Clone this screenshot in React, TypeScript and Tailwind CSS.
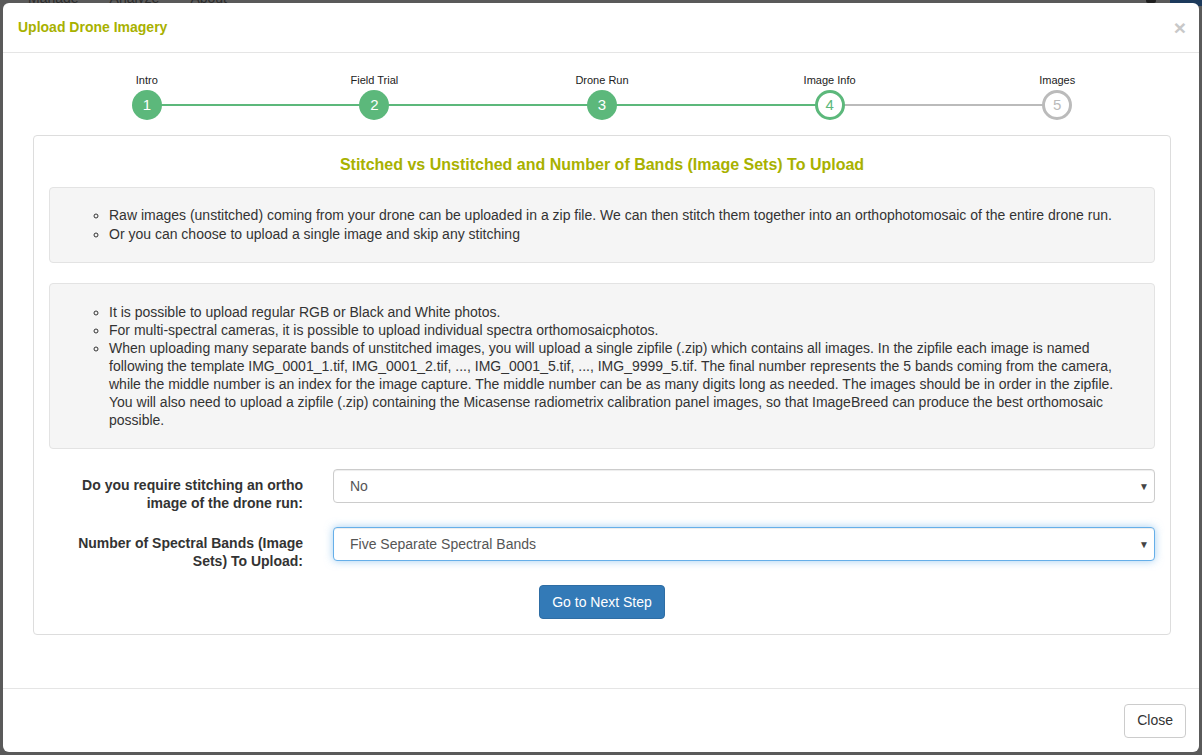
import React, { useState } from 'react';

const steps = [
  { label: 'Intro', state: 'done' },
  { label: 'Field Trial', state: 'done' },
  { label: 'Drone Run', state: 'done' },
  { label: 'Image Info', state: 'active' },
  { label: 'Images', state: 'todo' },
];

const Stepper: React.FC = () => (
  <div className="grid grid-cols-5 ml-[15px] mr-[13px]">
    {steps.map((s, i) => (
      <div key={s.label} className="relative flex flex-col items-center">
        <div className="text-[11px] leading-[13px] text-[#222] mt-[1px] mb-[3px]">{s.label}</div>
        {/* connector to next step */}
        {i < steps.length - 1 && (
          <div
            className={`absolute top-[31px] left-1/2 w-full h-[2px] ${
              i < 3 ? 'bg-[#5cb87b]' : 'bg-[#bbbbbb]'
            }`}
          />
        )}
        <div
          className={`relative z-10 w-[30px] h-[30px] rounded-full flex items-center justify-center text-[15px] ${
            s.state === 'done'
              ? 'bg-[#5cb87b] text-white'
              : s.state === 'active'
              ? 'bg-white border-[3px] border-[#5cb87b] text-[#5cb87b]'
              : 'bg-white border-[3px] border-[#bbbbbb] text-[#bbbbbb]'
          }`}
        >
          {i + 1}
        </div>
      </div>
    ))}
  </div>
);

const Caret = () => (
  <span className="pointer-events-none absolute right-[6px] top-1/2 -translate-y-1/2 text-[10px] text-[#444]">▼</span>
);

export default function App() {
  const [stitch, setStitch] = useState('No');
  const [bands, setBands] = useState('Five Separate Spectral Bands');

  return (
    <div
      className="relative w-[1202px] h-[755px] overflow-hidden bg-[#5a5a5a]"
      style={{ fontFamily: '"Liberation Sans", Arial, sans-serif' }}
    >
      {/* page behind the backdrop */}
      <div className="flex items-start justify-between -mt-[12px]">
        <div className="flex gap-[31px] pl-[28px] text-[14px] text-[#2c2c2c]">
          <span>Manage</span>
          <span>Analyze</span>
          <span>About</span>
        </div>
        <div className="flex items-start gap-[14px] pt-[12px]">
          <div className="w-[10px] h-[4px] rounded-full bg-[#1f1f1f] mt-[-1px]" />
          <div className="w-[32px] h-[6px] bg-[#1d3a5c]" />
        </div>
      </div>

      {/* modal */}
      <div className="absolute left-[3px] top-[3px] w-[1196px] h-[749px] bg-white rounded-[6px] flex flex-col text-[14px] text-[#333]">
        <div className="h-[50px] flex items-center justify-between px-[15px] border-b border-[#e5e5e5]">
          <h4 className="font-bold text-[14px] text-[#a8b100]">Upload Drone Imagery</h4>
          <button className="text-[21px] font-bold leading-none text-[#c8c8c8] -mr-[2px]">×</button>
        </div>

        <div className="flex-1 px-[15px] pt-[20px]">
          <Stepper />

          <div className="ml-[15px] mr-[13px] mt-[15px] border border-[#dddddd] rounded-[4px] px-[15px] pb-[15px]">
            <h3 className="text-center font-bold text-[16px] text-[#a8b100] mt-[17px] mb-[10px]">
              Stitched vs Unstitched and Number of Bands (Image Sets) To Upload
            </h3>

            <div className="bg-[#f5f5f5] border border-[#e3e3e3] rounded-[4px] px-[19px] pt-[18px] pb-[18px] leading-[19px]">
              <ul className="list-[circle] pl-[40px]">
                <li>Raw images (unstitched) coming from your drone can be uploaded in a zip file. We can then stitch them together into an orthophotomosaic of the entire drone run.</li>
                <li>Or you can choose to upload a single image and skip any stitching</li>
              </ul>
            </div>

            <div className="mt-[20px] bg-[#f5f5f5] border border-[#e3e3e3] rounded-[4px] px-[19px] pt-[19px] pb-[19px] leading-[18px]">
              <ul className="list-[circle] pl-[40px]">
                <li>It is possible to upload regular RGB or Black and White photos.</li>
                <li>For multi-spectral cameras, it is possible to upload individual spectra orthomosaicphotos.</li>
                <li>
                  When uploading many separate bands of unstitched images, you will upload a single zipfile (.zip) which contains all images. In the zipfile each image is named following the template IMG_0001_1.tif, IMG_0001_2.tif, ..., IMG_0001_5.tif, ..., IMG_9999_5.tif. The final number represents the 5 bands coming from the camera, while the middle number is an index for the image capture. The middle number can be as many digits long as needed. The images should be in order in the zipfile. You will also need to upload a zipfile (.zip) containing the Micasense radiometrix calibration panel images, so that ImageBreed can produce the best orthomosaic possible.
                </li>
              </ul>
            </div>

            <div className="mt-[20px] flex flex-col gap-[15px]">
              <div className="flex items-start">
                <label className="w-[254px] shrink-0 text-right font-bold leading-[18px] pt-[7px]">
                  Do you require stitching an ortho image of the drone run:
                </label>
                <div className="relative flex-1 ml-[30px]">
                  <select
                    value={stitch}
                    onChange={e => setStitch(e.target.value)}
                    className="appearance-none w-full h-[34px] pl-[16px] pr-[24px] border border-[#cccccc] rounded-[4px] bg-white text-[14px] text-[#555] shadow-[inset_0_1px_1px_rgba(0,0,0,0.075)] outline-none"
                  >
                    <option>No</option>
                    <option>Yes</option>
                  </select>
                  <Caret />
                </div>
              </div>

              <div className="flex items-start">
                <label className="w-[254px] shrink-0 text-right font-bold leading-[18px] pt-[7px]">
                  Number of Spectral Bands (Image Sets) To Upload:
                </label>
                <div className="relative flex-1 ml-[30px]">
                  <select
                    value={bands}
                    onChange={e => setBands(e.target.value)}
                    className="appearance-none w-full h-[34px] pl-[16px] pr-[24px] border border-[#66afe9] rounded-[4px] bg-white text-[14px] text-[#555] shadow-[inset_0_1px_1px_rgba(0,0,0,0.075),0_0_8px_rgba(102,175,233,0.6)] outline-none"
                  >
                    <option>Five Separate Spectral Bands</option>
                    <option>Single Image</option>
                  </select>
                  <Caret />
                </div>
              </div>
            </div>

            <div className="flex justify-center mt-[15px]">
              <button className="h-[34px] px-[12px] bg-[#337ab7] border border-[#2e6da4] rounded-[4px] text-white text-[14px]">
                Go to Next Step
              </button>
            </div>
          </div>
        </div>

        <div className="h-[64px] border-t border-[#e5e5e5] flex items-center justify-end px-[13px]">
          <button className="h-[34px] px-[12px] bg-white border border-[#cccccc] rounded-[4px] text-[14px] text-[#333]">
            Close
          </button>
        </div>
      </div>
    </div>
  );
}
